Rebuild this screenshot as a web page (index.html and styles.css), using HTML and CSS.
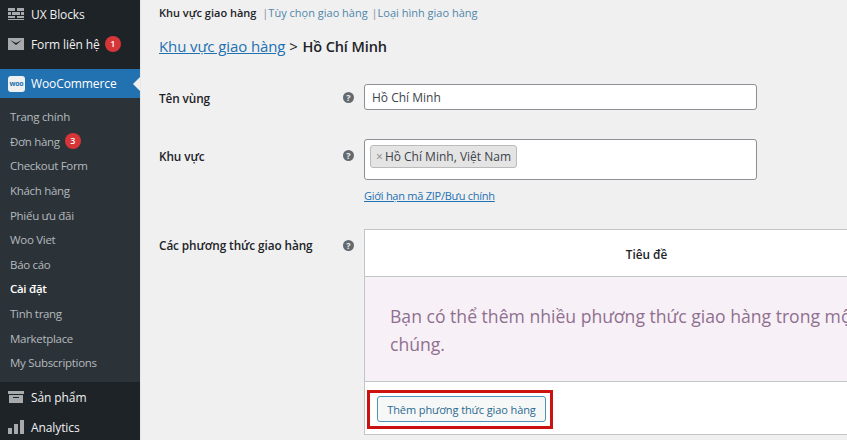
FILE: index.html
```html
<!DOCTYPE html>
<html lang="vi">

<head>
    <meta charset="UTF-8">
    <title>Khu vực giao hàng</title>
    <link rel="stylesheet" href="styles.css">
</head>

<body>
    <div class="wrap">
        <nav class="sidebar">
            <a class="menu-item">
                <svg class="menu-icon" viewBox="0 0 16 12"><path d="M0 0h7v3H0zM9 0h7v3H9zM0 4h3v3H0zM4 4h8v3H4zM13 4h3v3h-3zM0 8h7v2H0zM9 8h7v2H9zM0 11h16v1H0z"/></svg>
                UX Blocks
            </a>
            <a class="menu-item">
                <svg class="menu-icon" viewBox="0 0 16 12"><path d="M0 0h16v12H0zM2 2l6 5 6-5-6 3z" fill-rule="evenodd"/></svg>
                Form liên hệ <span class="count">1</span>
            </a>
            <a class="menu-item active">
                <span class="woo-icon">woo</span>
                WooCommerce
            </a>
            <ul class="submenu">
                <li>Trang chính</li>
                <li>Đơn hàng <span class="count">3</span></li>
                <li>Checkout Form</li>
                <li>Khách hàng</li>
                <li>Phiếu ưu đãi</li>
                <li>Woo Viet</li>
                <li>Báo cáo</li>
                <li class="current">Cài đặt</li>
                <li>Tình trạng</li>
                <li>Marketplace</li>
                <li>My Subscriptions</li>
            </ul>
            <a class="menu-item">
                <svg class="menu-icon" viewBox="0 0 16 12"><path d="M0 0h16v3H0zM1 4h14v8H1zM5 6v1h6V6z" fill-rule="evenodd"/></svg>
                Sản phẩm
            </a>
            <a class="menu-item">
                <svg class="menu-icon tall" viewBox="0 0 16 14"><path d="M0 8h4v6H0zM6 4h4v10H6zM12 0h4v14h-4z"/></svg>
                Analytics
            </a>
        </nav>

        <main class="content">
            <div class="tabs">
                <strong>Khu vực giao hàng</strong>
                <span class="sep">|</span><a>Tùy chọn giao hàng</a>
                <span class="sep">|</span><a>Loại hình giao hàng</a>
            </div>

            <h2 class="title"><a>Khu vực giao hàng</a> &gt; <span class="zone-name">Hồ Chí Minh</span></h2>

            <div class="row row-name">
                <label>Tên vùng</label>
                <span class="help">?</span>
                <input class="text-input" type="text" value="Hồ Chí Minh">
            </div>

            <div class="row row-area">
                <label>Khu vực</label>
                <span class="help">?</span>
                <div class="field">
                    <div class="select-box">
                        <span class="tag"><i>×</i>Hồ Chí Minh, Việt Nam</span>
                    </div>
                    <a class="zip-link">Giới hạn mã ZIP/Bưu chính</a>
                </div>
            </div>

            <div class="row row-methods">
                <label>Các phương thức giao hàng</label>
                <span class="help">?</span>
                <div class="methods">
                    <div class="methods-head">Tiêu đề</div>
                    <div class="methods-blank">
                        Bạn có thể thêm nhiều phương thức giao hàng trong một khu vực. Chỉ những khách hàng trong khu vực mới thấy<br>
                        chúng.
                    </div>
                    <div class="methods-foot">
                        <div class="highlight">
                            <button class="add-btn">Thêm phương thức giao hàng</button>
                        </div>
                    </div>
                </div>
            </div>
        </main>
    </div>
</body>

</html>
```

FILE: styles.css
```css
* {
    margin: 0;
    padding: 0;
    box-sizing: border-box;
}

html,
body {
    height: 440px;
    overflow: hidden;
}

body {
    font-family: 'Open Sans', 'Noto Sans', sans-serif;
    font-size: 12px;
    background-color: #f0f0f1;
    color: #3c434a;
}

.wrap {
    display: flex;
    height: 440px;
}

/* sidebar */
.sidebar {
    width: 141px;
    flex-shrink: 0;
    margin-top: -1px;
    background-color: #1d2327;
    border-right: 1px solid #e6e6e8;
    color: #f0f0f1;
}

.menu-item {
    display: flex;
    align-items: center;
    height: 30px;
    padding-left: 8px;
    font-size: 12px;
    letter-spacing: -0.1px;
    white-space: nowrap;
}

.menu-item:nth-child(3) {
    margin-top: 10px;
}

.menu-icon {
    width: 16px;
    height: 12px;
    margin-right: 7px;
    fill: #a7aaad;
    flex-shrink: 0;
}

.menu-icon.tall {
    height: 14px;
}

.menu-item.active {
    position: relative;
    height: 29px;
    background-color: #2271b1;
    color: #fff;
}

.menu-item.active::after {
    content: '';
    position: absolute;
    right: 0;
    top: 8px;
    border: 7px solid transparent;
    border-left-width: 0;
    border-right-color: #f0f0f1;
}

.woo-icon {
    width: 17px;
    height: 16px;
    margin-right: 6px;
    border-radius: 3px;
    background-color: #f0f0f1;
    color: #2271b1;
    font-size: 7px;
    font-weight: 700;
    line-height: 15px;
    text-align: center;
    letter-spacing: -0.3px;
}

.count {
    display: inline-block;
    width: 16px;
    height: 16px;
    margin-left: 5px;
    border-radius: 50%;
    background-color: #d63638;
    color: #fff;
    font-size: 9px;
    font-weight: 600;
    line-height: 16px;
    text-align: center;
}

.submenu {
    list-style: none;
    height: 284px;
    padding-top: 6.5px;
    background-color: #2c3338;
    color: #b4b9be;
}

.submenu li {
    display: flex;
    align-items: center;
    height: 24.6px;
    padding-left: 10px;
    font-size: 11.5px;
    letter-spacing: -0.3px;
    white-space: nowrap;
}

.submenu .current {
    color: #fff;
    font-weight: 600;
}

/* main area */
.content {
    flex: 1;
    min-width: 0;
    padding: 4px 0 0 18px;
    overflow: hidden;
}

.tabs {
    height: 17px;
    font-size: 11px;
    line-height: 17px;
    color: #4f86a8;
    white-space: nowrap;
}

.tabs strong {
    color: #1d2327;
    font-weight: 600;
}

.tabs a {
    margin-right: -2px;
}

.sep {
    margin-left: 3px;
    color: #8c8f94;
}

.title {
    margin-top: 14px;
    height: 22px;
    font-size: 15px;
    font-weight: 400;
    line-height: 22px;
    color: #1d2327;
    letter-spacing: -0.1px;
}

.title a {
    color: #2271b1;
    text-decoration: underline;
}

.zone-name {
    margin-left: 1px;
    font-size: 14.5px;
    font-weight: 600;
}

.row {
    display: grid;
    grid-template-columns: 184px 21px 1fr;
    align-items: start;
}

.row label {
    margin-top: 8px;
    color: #1d2327;
    font-size: 11.8px;
    font-weight: 600;
    letter-spacing: -0.1px;
    white-space: nowrap;
}

.help {
    width: 11px;
    height: 11px;
    margin-top: 11px;
    border-radius: 50%;
    background-color: #646970;
    color: #f0f0f1;
    font-size: 9px;
    font-weight: 700;
    line-height: 11px;
    text-align: center;
}

.row-name {
    margin-top: 27px;
}

.row-name label {
    margin-top: 6px;
}

.row-name .help {
    margin-top: 8px;
}

.text-input {
    width: 393px;
    height: 26px;
    padding: 0 7px;
    border: 1px solid #8c8f94;
    border-radius: 3px;
    background-color: #fff;
    color: #3c434a;
    font-family: inherit;
    font-size: 12px;
}

.row-area {
    margin-top: 29px;
}

.row-area label {
    margin-top: 9px;
}

.select-box {
    width: 393px;
    height: 41px;
    padding: 5px 5px;
    border: 1px solid #8c8f94;
    border-radius: 3px;
    background-color: #fff;
}

.tag {
    display: inline-block;
    height: 23px;
    padding: 0 5px;
    border: 1px solid #bbb;
    border-radius: 3px;
    background-color: #e4e4e4;
    font-size: 12px;
    line-height: 21px;
    white-space: nowrap;
}

.tag i {
    margin-right: 2px;
    color: #888;
    font-style: normal;
}

.zip-link {
    display: block;
    margin-top: 8px;
    font-size: 11px;
    line-height: 16px;
    letter-spacing: -0.25px;
    color: #2271b1;
    text-decoration: underline;
}

.row-methods {
    margin-top: 25px;
}

.methods {
    width: 700px;
    border: 1px solid #c3c4c7;
    background-color: #fff;
}

.methods-head {
    height: 47px;
    padding-right: 135px;
    border-bottom: 1px solid #c3c4c7;
    color: #1d2327;
    font-size: 11.8px;
    font-weight: 600;
    line-height: 48px;
    text-align: center;
}

.methods-blank {
    height: 105px;
    padding: 25px 25px 0;
    border-bottom: 1px solid #c3c4c7;
    background-color: #f7f1f7;
    color: #8f6f8f;
    font-size: 17.6px;
    line-height: 28px;
    white-space: nowrap;
}

.methods-foot {
    height: 52px;
    padding: 8px 2px 0;
}

.highlight {
    display: inline-block;
    padding: 3px 4px 4px 7px;
    border: 3px solid #cc1111;
}

.add-btn {
    display: block;
    width: 169px;
    height: 26px;
    border: 1px solid #4f94b8;
    border-radius: 3px;
    background-color: #f6f7f7;
    color: #2a6a90;
    font-family: inherit;
    font-size: 11px;
    letter-spacing: -0.1px;
    white-space: nowrap;
}
```
